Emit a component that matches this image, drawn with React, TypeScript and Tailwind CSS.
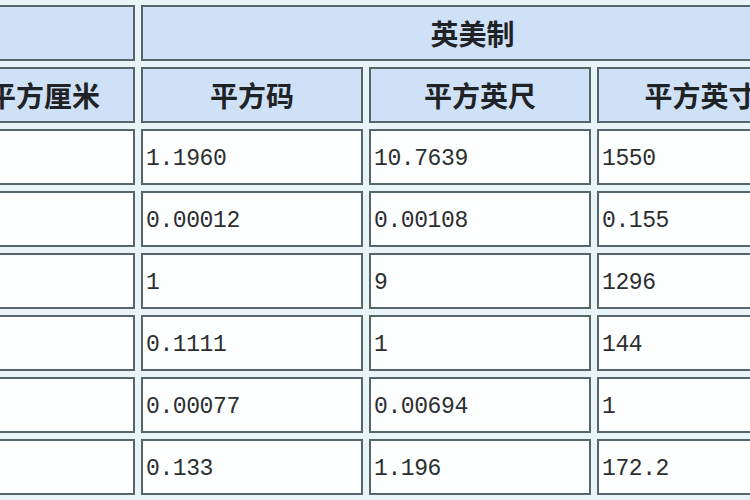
const rows: string[][] = [
  ["1.1960", "10.7639", "1550"],
  ["0.00012", "0.00108", "0.155"],
  ["1", "9", "1296"],
  ["0.1111", "1", "144"],
  ["0.00077", "0.00694", "1"],
  ["0.133", "1.196", "172.2"],
];

const cell = "border-2 border-[#56666a] p-0";
const head = `${cell} bg-[#cfe1f6] h-[56px] text-center align-middle text-[28px] font-bold text-[#1f2326] leading-none`;
const data = `${cell} bg-[#fdfefe] h-[56px] align-middle text-left pl-[3px] pt-1 text-[23px] tracking-[-0.4px] text-[#2b2f31] leading-none`;

export default function App() {
  return (
    <div className="w-[750px] h-[500px] overflow-hidden bg-[#e9f4f8]">
      <table
        className="-ml-[71px] -mt-px table-fixed border-separate border-spacing-[6px] w-[881px]"
        style={{ fontFamily: '"Noto Sans CJK SC", sans-serif' }}
      >
        <colgroup>
          <col className="w-[200px]" />
          <col className="w-[222px]" />
          <col className="w-[222px]" />
          <col className="w-[207px]" />
        </colgroup>
        <thead>
          <tr>
            <th className={head}></th>
            <th className={head} colSpan={3}>英美制</th>
          </tr>
          <tr>
            <th className={`${head} pl-[18px]`}>平方厘米</th>
            <th className={head}>平方码</th>
            <th className={head}>平方英尺</th>
            <th className={head}>平方英寸</th>
          </tr>
        </thead>
        <tbody>
          {rows.map((r, i) => (
            <tr key={i}>
              <td className={data}></td>
              {r.map((v, j) => (
                <td key={j} className={data} style={{ fontFamily: '"Liberation Mono", monospace' }}>
                  {v}
                </td>
              ))}
            </tr>
          ))}
        </tbody>
      </table>
    </div>
  );
}
